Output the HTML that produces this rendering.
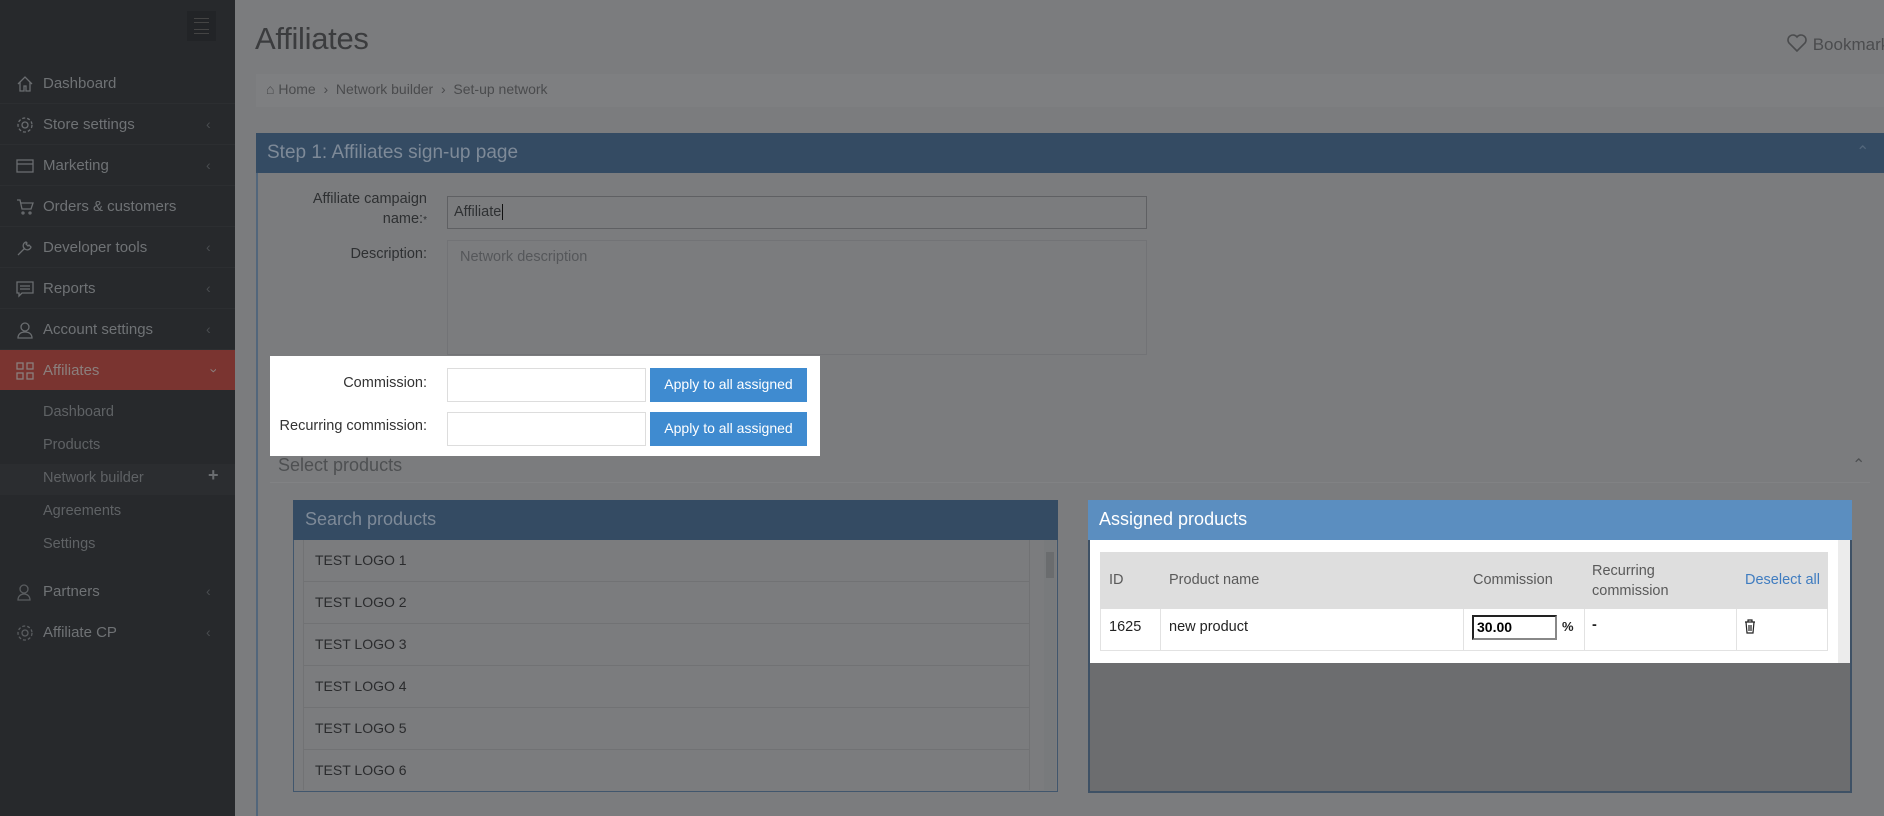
<!DOCTYPE html>
<html><head><meta charset="utf-8">
<style>
*{box-sizing:border-box;margin:0;padding:0}
body{width:1884px;height:816px;overflow:hidden;background:#7b7c7e;font-family:"Liberation Sans",sans-serif;position:relative;color:#2f3133}
.a{position:absolute}
#sb{left:0;top:0;width:235px;height:816px;background:#27292c}
.si{position:absolute;left:0;width:235px;height:41px;color:#6f7275;font-size:15px;line-height:41px;padding-left:43px;border-bottom:1px solid #2c2e31}
.si svg{position:absolute;left:16px;top:12px}
.si .ch{position:absolute;left:206px;top:0;color:#4a4d50;font-size:14px}
.sub{position:absolute;left:43px;color:#5f6265;font-size:14.5px}
.lbl{position:absolute;text-align:right;font-size:14.5px;color:#2e3032}
.inp{position:absolute;border:1px solid #5f6063;background:#7b7c7e}
.btn{position:absolute;background:#3f8bd0;color:#fff;font-size:14px;text-align:center;line-height:33px}
.row{position:absolute;left:307px;width:727px;height:42px;border:1px solid #717274;border-top:none;font-size:14px;line-height:40px;padding-left:11px;color:#2a2b2d}
.th{position:absolute;font-size:14.5px;color:#5a5a5a}
.td{position:absolute;font-size:14.5px;color:#222}
</style></head><body>
<div id="sb" class="a">
  <div class="a" style="left:187px;top:11px;width:29px;height:30px;background:#222427"></div>
  <div class="a" style="left:194px;top:18px;width:15px;height:16px;border-top:1px solid #444;border-bottom:1px solid #444"></div>
  <div class="a" style="left:194px;top:22px;width:15px;height:8px;border-top:1px solid #444;border-bottom:1px solid #444"></div>
  <div class="si" style="top:63px"><svg width="18" height="18" viewBox="0 0 18 18" fill="none" stroke="#6a6d70" stroke-width="1.3"><path d="M2 9L9 2l7 7M4 7v9h4v-5h2v5h4V7"/></svg>Dashboard</div>
  <div class="si" style="top:104px"><svg width="18" height="18" viewBox="0 0 18 18" fill="none" stroke="#6a6d70" stroke-width="1.3"><circle cx="9" cy="9" r="3"/><circle cx="9" cy="9" r="7" stroke-dasharray="3 2"/></svg>Store settings<span class="ch">&#8249;</span></div>
  <div class="si" style="top:145px"><svg width="18" height="18" viewBox="0 0 18 18" fill="none" stroke="#6a6d70" stroke-width="1.3"><rect x="1" y="3" width="16" height="12"/><path d="M1 7h16"/></svg>Marketing<span class="ch">&#8249;</span></div>
  <div class="si" style="top:186px"><svg width="18" height="18" viewBox="0 0 18 18" fill="none" stroke="#6a6d70" stroke-width="1.3"><path d="M1 2h3l2 9h9l2-6H5"/><circle cx="7" cy="15" r="1"/><circle cx="14" cy="15" r="1"/></svg>Orders &amp; customers</div>
  <div class="si" style="top:227px"><svg width="18" height="18" viewBox="0 0 18 18" fill="none" stroke="#6a6d70" stroke-width="1.3"><path d="M2 16l7-7M10 3a4 4 0 1 0 5 5l-2-2-1 1-2-2 1-1z"/></svg>Developer tools<span class="ch">&#8249;</span></div>
  <div class="si" style="top:268px"><svg width="18" height="18" viewBox="0 0 18 18" fill="none" stroke="#6a6d70" stroke-width="1.3"><path d="M1 2h16v11H6l-3 3v-3H1z M4 6h10M4 9h10"/></svg>Reports<span class="ch">&#8249;</span></div>
  <div class="si" style="top:309px"><svg width="18" height="18" viewBox="0 0 18 18" fill="none" stroke="#6a6d70" stroke-width="1.3"><circle cx="9" cy="6" r="4"/><path d="M2 17c0-4 3-6 7-6s7 2 7 6z"/></svg>Account settings<span class="ch">&#8249;</span></div>
  <div class="si" style="top:350px;height:40px;background:#7a3430;color:#8b7f7d;border:none"><svg width="18" height="18" viewBox="0 0 18 18" fill="none" stroke="#8b7f7d" stroke-width="1.3"><rect x="1" y="1" width="6" height="6"/><rect x="11" y="1" width="6" height="6"/><rect x="1" y="11" width="6" height="6"/><rect x="11" y="11" width="6" height="6"/></svg>Affiliates<span class="ch" style="color:#8b7f7d;transform:rotate(-90deg);left:210px">&#8249;</span></div>
  <div class="sub" style="top:404px">Dashboard</div>
  <div class="sub" style="top:437px">Products</div>
  <div class="a" style="left:0;top:464px;width:235px;height:31px;background:#2b2d30"></div>
  <div class="sub" style="top:470px">Network builder</div>
  <div class="a" style="left:208px;top:465px;color:#6a6d70;font-size:18px;font-weight:bold">+</div>
  <div class="sub" style="top:503px">Agreements</div>
  <div class="sub" style="top:536px">Settings</div>
  <div class="si" style="top:571px;border:none"><svg width="18" height="18" viewBox="0 0 18 18" fill="none" stroke="#5a5d60" stroke-width="1.3"><circle cx="8" cy="6" r="4"/><path d="M2 17c0-4 3-6 6-6s6 2 6 6z"/></svg>Partners<span class="ch">&#8249;</span></div>
  <div class="si" style="top:612px;border:none"><svg width="18" height="18" viewBox="0 0 18 18" fill="none" stroke="#5a5d60" stroke-width="1.3"><circle cx="9" cy="9" r="3"/><circle cx="9" cy="9" r="7" stroke-dasharray="3 2"/></svg>Affiliate CP<span class="ch">&#8249;</span></div>
</div>

<div class="a" style="left:255px;top:21px;font-size:31px;color:#3b3c3e;letter-spacing:-0.3px">Affiliates</div>
<div class="a" style="left:1786px;top:33px;font-size:17px;color:#4b4c4e;white-space:nowrap"><svg width="22" height="20" viewBox="0 0 22 20" style="vertical-align:-3px" fill="none" stroke="#4b4c4e" stroke-width="1.6"><path d="M11 18L3 10a4.5 4.5 0 0 1 8-6 4.5 4.5 0 0 1 8 6z"/></svg> Bookmark</div>
<div class="a" style="left:256px;top:74px;width:1628px;height:33px;background:#7e7f81"></div>
<div class="a" style="left:266px;top:81px;font-size:14px;color:#4a4b4d">&#8962; Home &nbsp;&#8250;&nbsp; Network builder &nbsp;&#8250;&nbsp; Set-up network</div>

<div class="a" style="left:256px;top:133px;width:1628px;height:40px;background:#344b63"></div>
<div class="a" style="left:267px;top:142px;font-size:19px;color:#7e8a98">Step 1: Affiliates sign-up page</div>
<div class="a" style="left:1856px;top:142px;color:#52667b;font-size:16px">&#8963;</div>
<div class="a" style="left:256px;top:173px;width:2px;height:643px;background:#52667b"></div>

<div class="lbl" style="left:280px;top:189px;width:147px;line-height:20px">Affiliate campaign<br>name:<span style="font-size:10px">*</span></div>
<div class="inp" style="left:447px;top:196px;width:700px;height:33px;font-size:14.5px;line-height:31px;padding-left:6px">Affiliate<span style="border-left:1px solid #111;margin-left:1px"></span></div>
<div class="lbl" style="left:280px;top:246px;width:147px">Description:</div>
<div class="inp" style="left:447px;top:240px;width:700px;height:115px;border-color:#727376;color:#55575a;font-size:14.5px;padding:8px 12px">Network description</div>

<div class="a" style="left:270px;top:356px;width:550px;height:100px;background:#fff"></div>
<div class="lbl" style="left:280px;top:375px;width:147px;color:#333">Commission:</div>
<div class="a" style="left:447px;top:368px;width:199px;height:34px;border:1px solid #ddd"></div>
<div class="btn" style="left:650px;top:368px;width:157px;height:34px">Apply to all assigned</div>
<div class="lbl" style="left:270px;top:418px;width:157px;color:#333">Recurring commission:</div>
<div class="inp" style="left:447px;top:412px;width:199px;height:34px;border:1px solid #ddd;background:#fff"></div>
<div class="btn" style="left:650px;top:412px;width:157px;height:34px">Apply to all assigned</div>

<div class="a" style="left:278px;top:455px;font-size:18px;color:#4e5052">Select products</div>
<div class="a" style="left:1852px;top:455px;color:#4e5052;font-size:16px">&#8963;</div>
<div class="a" style="left:270px;top:482px;width:1600px;height:1px;background:#818284"></div>

<div class="a" style="left:293px;top:500px;width:765px;height:292px;border:1px solid #41566d"></div>
<div class="a" style="left:293px;top:500px;width:765px;height:40px;background:#344b63"></div>
<div class="a" style="left:305px;top:509px;font-size:18px;color:#7e8a98">Search products</div>
<div class="a" style="left:296px;top:540px;width:760px;height:250px;overflow:hidden">
<div class="row" style="left:7px;top:0">TEST LOGO 1</div>
<div class="row" style="left:7px;top:42px">TEST LOGO 2</div>
<div class="row" style="left:7px;top:84px">TEST LOGO 3</div>
<div class="row" style="left:7px;top:126px">TEST LOGO 4</div>
<div class="row" style="left:7px;top:168px">TEST LOGO 5</div>
<div class="row" style="left:7px;top:210px">TEST LOGO 6</div>
<div class="a" style="left:748px;top:0;width:12px;height:250px;background:#787a7c"></div>
<div class="a" style="left:750px;top:12px;width:8px;height:26px;background:#6a6c6e"></div>
</div>

<div class="a" style="left:1088px;top:500px;width:764px;height:293px;border:2px solid #3e5165;border-top:none;background:#6c6d6f"></div>
<div class="a" style="left:1088px;top:500px;width:764px;height:40px;background:#5b8ec0"></div>
<div class="a" style="left:1099px;top:509px;font-size:18px;color:#fff">Assigned products</div>
<div class="a" style="left:1090px;top:540px;width:748px;height:123px;background:#fff"></div>
<div class="a" style="left:1838px;top:540px;width:12px;height:123px;background:#ececec"></div>
<div class="a" style="left:1100px;top:552px;width:728px;height:57px;background:#dedede"></div>
<div class="a" style="left:1100px;top:609px;width:728px;height:42px;border:1px solid #e2e2e2;border-top:none"></div>
<div class="a" style="left:1160px;top:609px;width:1px;height:42px;background:#e2e2e2"></div>
<div class="a" style="left:1463px;top:609px;width:1px;height:42px;background:#e2e2e2"></div>
<div class="a" style="left:1584px;top:609px;width:1px;height:42px;background:#e2e2e2"></div>
<div class="a" style="left:1736px;top:609px;width:1px;height:42px;background:#e2e2e2"></div>
<div class="th" style="left:1109px;top:572px">ID</div>
<div class="th" style="left:1169px;top:572px">Product name</div>
<div class="th" style="left:1473px;top:572px">Commission</div>
<div class="th" style="left:1592px;top:561px;line-height:20px">Recurring<br>commission</div>
<div class="th" style="left:1745px;top:572px;color:#3f7cc0">Deselect all</div>
<div class="td" style="left:1109px;top:619px">1625</div>
<div class="td" style="left:1169px;top:619px">new product</div>
<div class="a" style="left:1472px;top:615px;width:85px;height:25px;border:2px solid #222;border-right-color:#888;border-bottom-color:#888;font-size:14px;font-weight:bold;line-height:21px;padding-left:3px;color:#000">30.00</div>
<div class="td" style="left:1562px;top:619px;font-weight:bold;font-size:13px">%</div>
<div class="td" style="left:1592px;top:617px;font-weight:bold">-</div>
<svg class="a" style="left:1744px;top:619px" width="12" height="15" viewBox="0 0 12 15" fill="none" stroke="#222" stroke-width="1.2"><path d="M1 3h10M4 3V1h4v2M2 3l1 11h6l1-11M5 6v6M7 6v6"/></svg>
</body></html>
